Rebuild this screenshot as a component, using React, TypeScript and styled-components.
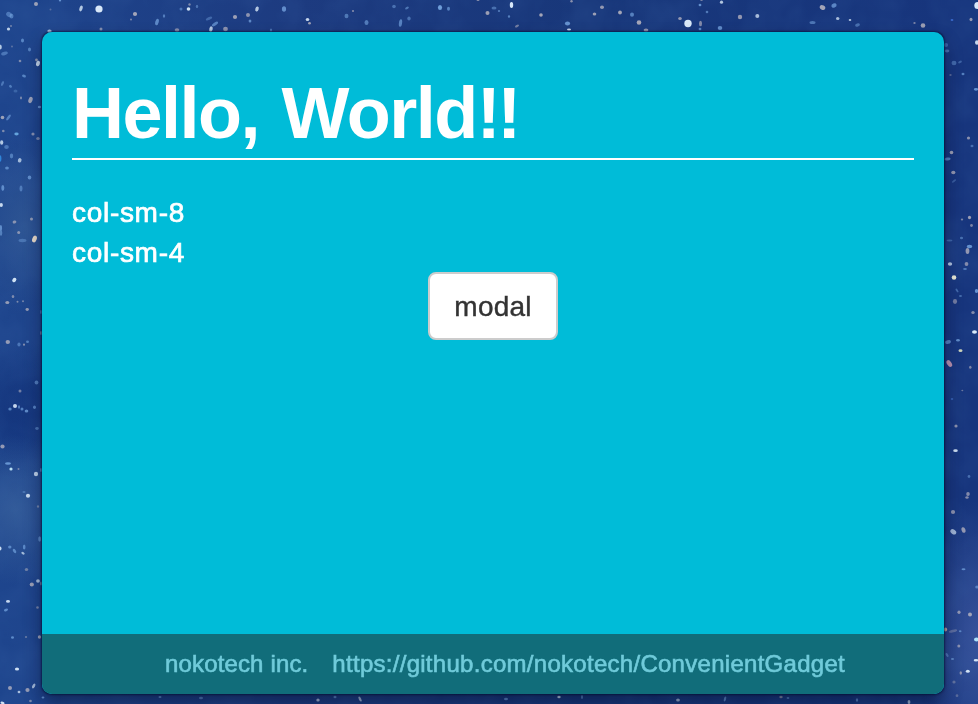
import React from "react";
import styled, { createGlobalStyle } from "styled-components";

const GlobalStyle = createGlobalStyle`
  * { box-sizing: border-box; }
  html, body { margin: 0; padding: 0; overflow: hidden; }
  body { font-family: "Liberation Sans", Arial, sans-serif; }
`;

const Desktop = styled.div`
  position: relative;
  width: 978px;
  height: 704px;
  padding: 32px 34px 10px 42px;
  overflow: hidden;
  background:
    radial-gradient(ellipse 60px 75px at 15px 510px, rgba(70, 112, 165, 0.5), transparent),
    radial-gradient(ellipse 55px 90px at 25px 225px, rgba(64, 104, 155, 0.45), transparent),
    radial-gradient(ellipse 60px 70px at 20px 410px, rgba(10, 38, 110, 0.6), transparent),
    radial-gradient(ellipse 60px 140px at 978px 640px, rgba(66, 92, 165, 0.75), transparent),
    linear-gradient(90deg, #1e458d 0%, #1d3b80 30%, #18377a 60%, #17357d 100%);
`;

const Sky = styled.svg`
  position: absolute;
  inset: 0;
`;

const Window = styled.main`
  position: relative;
  display: flex;
  flex-direction: column;
  height: 662px;
  overflow: hidden;
  border-radius: 10px;
  background: #00bcd8;
`;

const Frame = styled.div`
  position: relative;
  border-radius: 10px;
  box-shadow: 0 0 2px 0.5px rgba(0, 10, 40, 0.55), 0 10px 18px rgba(0, 8, 35, 0.45);
`;

const Content = styled.div`
  flex: 1;
  padding: 40px 30px 0;
  color: #fff;
`;

const Title = styled.h1`
  height: 88px;
  margin: 0 0 32px;
  border-bottom: 2px solid #fff;
  font-size: 72px;
  line-height: 83px;
  letter-spacing: -1.5px;
  word-spacing: 4px;
  white-space: nowrap;
`;

const Exclaim = styled.span`
  letter-spacing: -3.5px;
`;

const Column = styled.div`
  height: 40px;
  font-size: 28px;
  line-height: 42px;
  letter-spacing: 0.7px;
  -webkit-text-stroke: 0.7px currentColor;
`;

const Actions = styled.div`
  display: flex;
  justify-content: center;
`;

const Button = styled.button`
  width: 130px;
  height: 68px;
  padding: 2px 0 0;
  border: 2px solid #ccc;
  border-radius: 8px;
  background: #fff;
  color: #333;
  font: 28px/40px "Liberation Sans", Arial, sans-serif;
  letter-spacing: 0.2px;
  -webkit-text-stroke: 0.4px currentColor;
`;

const Footer = styled.footer`
  display: flex;
  justify-content: center;
  gap: 24px;
  height: 60px;
  padding-left: 24px;
  background: #116d7a;
  color: #70cbda;
  font-size: 24px;
  line-height: 60px;
  white-space: nowrap;
  -webkit-text-stroke: 0.6px currentColor;
`;

const FooterText = styled.span<{ $spacing: number }>`
  letter-spacing: ${(p) => p.$spacing}px;
`;

// Each star: x, y, horizontal radius, vertical radius, tint, opacity, tilt.
type Star = [number, number, number, number, string, number, number?];
const W = "#e3f2ff";
const B = "#7daee8";
const G = "#c6bfc6";

const stars: Star[] = [
  [36, 4, 2, 2, G, 0.8], [60, 0, 1.2, 1.5, B, 0.8], [81, 8.5, 1.6, 3, W, 0.8, 20], [99, 9, 3.6, 3.6, W, 1],
  [9, 14.5, 3, 2.4, B, 0.5, 35], [11.5, 16, 2, 2.5, B, 0.55], [8.5, 29, 1.6, 1.5, W, 0.85], [11, 26, 1, 1, G, 0.55],
  [49.5, 31, 2.2, 1.5, W, 0.75], [50.5, 9.5, 1, 1, G, 0.35], [101, 29, 1.5, 1.5, G, 0.65], [135, 14, 2.1, 2.1, G, 0.85],
  [131, 19.5, 1, 1, G, 0.6], [157, 22, 1.7, 3.4, B, 0.7, 15], [164, 16, 1.2, 1.7, B, 0.6], [177, 30, 2.3, 1.8, G, 0.65],
  [181, 9, 1.5, 1.5, B, 0.5], [188.5, 9, 1.8, 1.7, W, 0.95], [189.5, 4.5, 1.2, 1.2, G, 0.6], [197, 6.5, 1.2, 1.8, B, 0.5],
  [209, 18.5, 3.4, 1.5, B, 0.4, -25], [211, 29, 1.7, 2.7, W, 0.8, 15], [215, 24, 3.6, 1.4, B, 0.65, -35],
  [225.5, 29, 2.4, 2.2, G, 0.7], [235, 17, 2.1, 2, G, 0.8], [248, 15, 2, 1.9, G, 0.7], [250, 21, 1.4, 1.6, B, 0.7],
  [257, 9, 1.7, 2.5, W, 0.8, 18], [284, 9, 2.1, 2.8, B, 0.75], [307.5, 19.5, 1.8, 1.5, W, 0.9],
  [309.5, 23.3, 1.4, 1.2, G, 0.8], [271, 30, 1.2, 1.6, B, 0.5], [346.5, 16, 2, 2.3, B, 0.55],
  [353, 11, 1.1, 1, G, 0.65], [366.5, 22.5, 2, 2.5, B, 0.6], [394, 6.5, 1.8, 1.7, B, 0.5],
  [400.5, 23, 1.6, 3.8, B, 0.65, 8], [407, 8, 2, 1.2, B, 0.55, -30], [409, 18.5, 1.7, 1.9, B, 0.5],
  [440, 7.5, 2.1, 2.6, B, 0.9], [448.5, 8.7, 1.5, 2, B, 0.65], [478, 0, 1.5, 1, G, 0.7],
  [487.5, 13, 2, 2, G, 0.8], [494, 8, 2.5, 1.5, B, 0.5], [499, 11, 1.2, 1, B, 0.6],
  [509, 16.5, 1.2, 1.3, B, 0.65], [511.5, 5, 1.7, 3, W, 1], [517, 26, 2.2, 1.2, G, 0.55, -30],
  [541, 15, 1.8, 1.8, G, 0.85], [567.5, 23.5, 2.6, 2.1, B, 0.8], [569, 29.5, 2, 1.1, W, 0.9],
  [571.5, 1.2, 1.2, 1.2, G, 0.7], [594.5, 14, 1.8, 1.6, G, 0.8], [602, 7.2, 2, 1.8, G, 0.75],
  [620, 12.5, 1.9, 1.9, G, 0.85], [632, 14.7, 2, 2.1, B, 0.65], [639, 22.5, 2.3, 2.2, G, 0.85],
  [646, 30, 2.4, 1.6, G, 0.75], [688, 23.5, 3.7, 3.7, W, 1], [680, 18.5, 1.8, 1.6, G, 0.75],
  [700.5, 23.5, 1.5, 2.8, G, 0.65], [700, 29, 1.4, 1.2, B, 0.7], [700, 5, 1.4, 1.3, B, 0.8],
  [701.5, 0, 1.3, 1, G, 0.6], [721.5, 2.2, 1.6, 1.6, W, 0.8], [720, 28, 2.3, 1.9, B, 0.75],
  [740, 17, 2.2, 2.2, G, 0.75], [757.3, 16, 2, 1.9, W, 0.75], [707, 12, 1.3, 1.2, B, 0.6],
  [812.5, 22.5, 3, 1.5, B, 0.55], [822.5, 7.5, 2.9, 2.3, G, 0.85, 30], [834, 5.5, 2.7, 2, B, 0.7, -20],
  [837.7, 18.5, 1.7, 1.6, W, 0.75], [850, 20, 1.3, 1.1, W, 0.8], [857.5, 25, 2.5, 1.6, B, 0.5, -20],
  [923, 25.5, 2.3, 2.2, G, 0.8], [914.5, 23, 1.2, 1, G, 0.6], [952, 20, 1.4, 1.1, "#4a80ee", 0.7],
  [971, 19.5, 1.5, 1.8, G, 0.75], [977.5, 5.5, 3.2, 3.6, W, 1], [977, 42.5, 2, 2.2, W, 0.9],
  [946, 45, 2.1, 2, B, 0.4], [947, 51, 2.4, 1.4, B, 0.5], [22.5, 40.5, 1.5, 2, B, 0.65],
  [0, 47, 1.8, 2.5, W, 0.8], [12, 46.5, 1, 1, G, 0.4], [29.5, 49.5, 1.5, 2, B, 0.6],
  [4.5, 53.5, 3.4, 1.7, B, 0.5, -15], [20, 61, 1.3, 1.3, G, 0.6], [36.5, 60, 1.4, 1.4, G, 0.7],
  [38, 63.5, 1.9, 2.8, W, 0.9, 20], [24, 76, 2, 1.4, B, 0.65, 20], [2.5, 83.5, 1.2, 2.6, B, 0.5, 25],
  [10.5, 86.3, 1.6, 1.3, B, 0.55, 45], [15.5, 91, 2, 1.5, B, 0.3], [30.5, 100, 2, 3.2, G, 0.8, 20],
  [21, 98, 1, 1.4, G, 0.6], [39.5, 107, 1.7, 1.2, B, 0.75], [2.5, 117.5, 1.8, 1.8, G, 0.8],
  [8.5, 117.5, 1.2, 3.5, B, 0.6, 35], [3.3, 131, 1.3, 1.3, G, 0.6], [16.5, 134, 2.2, 1.4, "#76b9ee", 0.85],
  [33, 134, 1.6, 1.6, G, 0.65], [38, 138.5, 1.8, 1.5, G, 0.55], [1.7, 142.5, 1.6, 2.2, W, 0.8],
  [6.5, 147, 2.3, 2, B, 0.5], [0, 158.5, 1.4, 3.2, "#38a4ff", 0.7], [11.5, 156, 1.7, 2.4, B, 0.55],
  [19.7, 160.3, 1.8, 2.3, W, 0.7, 20], [7, 168, 1.9, 1.5, B, 0.65], [29.5, 177.5, 1.8, 2, B, 0.7],
  [2.8, 188, 1.5, 2.9, B, 0.7], [21, 188.5, 1.5, 3, B, 0.5], [1.2, 205, 1.7, 2, W, 0.9],
  [31.5, 219, 1.5, 1.6, G, 0.7], [14.5, 222, 1.9, 1.5, G, 0.65, -20], [18.7, 232.5, 1.5, 1.6, G, 0.65],
  [0.8, 228, 1.3, 3, B, 0.7], [34.5, 239, 2.2, 3.5, "#ffebd0", 0.95, 20], [22.5, 240.5, 4, 1.7, B, 0.4],
  [1, 233, 1.3, 3, B, 0.55], [14.3, 280, 1.9, 2.4, W, 0.95, 35], [13, 296.5, 1.3, 1.6, G, 0.6],
  [7.3, 302.5, 2, 1.6, G, 0.75], [17.5, 301.7, 1, 1, G, 0.6], [23, 301.3, 1, 1, G, 0.55],
  [27.2, 309.5, 1.7, 1.4, G, 0.75], [7.8, 342, 2.2, 2, G, 0.75], [19, 344.5, 1.6, 2, B, 0.5],
  [27.5, 341.8, 1.5, 1.3, B, 0.6], [24, 344.7, 1.1, 1.1, G, 0.65], [41, 312, 1, 2, B, 0.5],
  [41, 333, 1, 2, G, 0.5], [36.5, 382.5, 1.9, 2, B, 0.6], [20, 391, 1.5, 1.6, G, 0.55],
  [15, 406, 2, 1.9, W, 0.9], [10, 409, 1.7, 1.5, B, 0.65], [19, 407, 1.1, 1.7, B, 0.6],
  [22, 409, 1.5, 1.6, B, 0.65], [26.5, 411, 1.8, 1.5, B, 0.75], [34.5, 407.3, 1.5, 1.8, B, 0.65],
  [37, 428.5, 1.8, 1.4, B, 0.5], [2.5, 446.5, 2.1, 2.1, G, 0.75], [8, 463.5, 3, 1.3, B, 0.8],
  [11, 469, 1.6, 1.6, "#c9f0ff", 0.95], [18.5, 469, 1, 1, G, 0.55], [36, 474, 2.1, 2.2, W, 0.85],
  [41, 470, 1, 2, B, 0.65], [28, 495.7, 2.1, 2, W, 0.9], [24, 492, 1.6, 1, B, 0.4],
  [38, 506.5, 1.1, 1.2, G, 0.5], [0, 548.5, 1.5, 2, W, 0.9], [9.8, 547, 1.7, 1.5, B, 0.65],
  [24.2, 547, 1.3, 2.5, B, 0.65], [14.5, 551, 1.4, 2.4, B, 0.65, -35], [23, 553.2, 1.8, 1.2, W, 0.7, 30],
  [39.7, 539, 1.4, 2.7, B, 0.65], [26.5, 569.5, 1.7, 1.6, G, 0.5], [31.8, 584.5, 2.1, 1.9, G, 0.8],
  [38, 581, 1.9, 1.7, W, 0.75], [41, 583.5, 1, 2, G, 0.5], [8, 601.4, 2, 1.4, W, 0.9],
  [6, 610, 2.1, 1.2, B, 0.7, -20], [37.5, 607.5, 1.3, 1.2, G, 0.55], [12.5, 637.5, 1.5, 1.2, B, 0.7],
  [26, 637, 1.2, 1.1, G, 0.45], [39.5, 637, 1.7, 1.8, G, 0.8], [17, 669, 2.1, 1.5, W, 0.95],
  [10, 688, 2, 1.9, G, 0.75], [19, 692, 1.4, 1.3, W, 0.75], [27.5, 690, 2.1, 1.9, G, 0.75],
  [33.7, 686, 1.3, 2.6, W, 0.7, 30], [2.5, 703, 2.1, 1.3, W, 0.95, 20], [30.5, 701, 1.3, 1.2, G, 0.6],
  [43, 697.5, 1.4, 1.1, B, 0.8], [954, 63, 2.5, 2.2, B, 0.45], [960, 62, 2, 1.1, B, 0.4, -25],
  [963, 74, 1.5, 1.3, B, 0.65], [950.5, 75, 1.2, 1, G, 0.4], [976, 89.3, 2.2, 1.4, B, 0.8],
  [968.5, 138, 1.6, 1.6, G, 0.7], [972, 146, 1.5, 1.2, B, 0.5], [951.5, 152.5, 1.8, 1.7, G, 0.8],
  [947.5, 159, 3.1, 1.5, B, 0.65, -10], [953.3, 172.5, 2.1, 1.8, G, 0.75],
  [954, 181, 2.4, 1, B, 0.35, -35], [969.5, 217.5, 1.6, 1.8, G, 0.8], [962, 219.5, 1.2, 1.1, G, 0.6],
  [971.5, 225.5, 1.4, 1.4, G, 0.6], [961.5, 238, 1.6, 1.3, B, 0.5], [949.5, 240.5, 3, 1, B, 0.4],
  [969.5, 246.5, 2.8, 1.7, B, 0.8], [967.5, 251, 1.9, 3, G, 0.75], [950, 264, 2.2, 1.8, W, 0.8],
  [966.5, 264, 1.9, 2, G, 0.65], [965, 269, 1.9, 1, B, 0.6], [954, 277.5, 2.3, 2.2, "#f5f4dc", 1],
  [976.5, 291, 1.7, 2, B, 0.8], [957, 290.5, 1, 2.2, B, 0.45, -35], [960.5, 296, 1.5, 1.1, B, 0.5],
  [955, 301.5, 2.1, 2.4, G, 0.55], [973, 312.5, 1.7, 1.6, G, 0.65], [974.5, 332, 2.5, 1.8, W, 1],
  [948, 342, 3, 1.9, B, 0.65, -15], [958, 340.2, 1.9, 1.2, B, 0.75], [960.5, 350.7, 2, 1.4, "#eceec8", 0.9],
  [949.3, 363.5, 2.2, 3.8, "#e2a9bb", 0.85, -35], [970.3, 367.3, 1.2, 1.5, G, 0.6],
  [962.3, 390.5, 1, 0.8, G, 0.5], [952, 399, 1.3, 0.8, "#568ae8", 0.7], [956, 426, 1.6, 1.5, G, 0.7],
  [955.5, 450.7, 2.3, 1.4, W, 0.95], [969, 476.5, 1.4, 1.4, B, 0.5], [968, 494, 1.8, 1.9, G, 0.65],
  [967, 497.5, 1.7, 1.3, G, 0.65], [953, 512, 2.1, 1.9, G, 0.7], [953.3, 531.8, 3.2, 2.3, W, 0.7, 35],
  [963.5, 530, 1.9, 2.9, G, 0.75, -20], [963.5, 569.3, 2, 1, B, 0.7], [977, 587, 1.8, 1.5, B, 0.6],
  [959, 612.3, 1.6, 1.7, G, 0.7], [970, 614.5, 2, 2.1, G, 0.8], [945.5, 629.5, 1.6, 2, "#efc4a8", 0.85],
  [953, 631, 4.3, 1.4, G, 0.35, -15], [960.2, 631.2, 1.3, 1, B, 0.65], [976.5, 639.5, 2.5, 1.9, "#b4e9ff", 1],
  [958.8, 646, 1.5, 1.6, G, 0.65], [947, 655, 1.2, 2.2, B, 0.5, -30], [952.5, 659, 1.6, 1.1, B, 0.65],
  [976, 660.3, 2.3, 1.3, W, 0.95], [967.8, 671.3, 2, 1.5, W, 0.95], [960.8, 673, 1.2, 1.7, G, 0.7],
  [954, 682, 1.6, 1.5, G, 0.4], [957, 695.7, 1.4, 1.4, G, 0.35],
  [160, 697, 1.5, 1, B, 0.75], [201, 698, 2, 1.3, B, 0.6], [318, 700, 1.7, 1.5, W, 0.75],
  [335, 697, 1.5, 1.2, B, 0.7], [360, 699, 1.2, 2.8, W, 0.7, -25], [506, 699, 2, 1.2, B, 0.7],
  [559, 697, 1.7, 1.3, W, 0.85], [582, 697, 1, 2, B, 0.65], [678, 700, 1.9, 1.5, W, 0.7],
  [725, 699, 1.1, 2.5, B, 0.7, 15], [781, 697, 1.7, 1.3, G, 0.65], [788, 698, 1.4, 1.1, B, 0.6],
  [857, 700, 1.2, 1.8, B, 0.65], [909, 702, 1.4, 2, W, 0.7],
];

const NightSky = () => (
  <Sky width="978" height="704" viewBox="0 0 978 704" aria-hidden="true">
    <defs>
      <filter id="haze" x="0" y="0" width="100%" height="100%" colorInterpolationFilters="sRGB">
        <feTurbulence type="fractalNoise" baseFrequency="0.03 0.025" numOctaves="3" seed="8" />
        <feColorMatrix values="0 0 0 0 0.25  0 0 0 0 0.42  0 0 0 0 0.68  0.9 0 0 0 -0.3" />
      </filter>
      <filter
        id="glow"
        filterUnits="userSpaceOnUse"
        x="-10"
        y="-10"
        width="998"
        height="724"
        colorInterpolationFilters="sRGB"
      >
        <feGaussianBlur stdDeviation="0.75" />
      </filter>
    </defs>
    <rect width="978" height="704" filter="url(#haze)" opacity="0.35" />
    <g filter="url(#glow)" opacity="0.95">
      {stars.map(([x, y, rx, ry, fill, opacity, tilt = 0], i) => (
        <ellipse
          key={i}
          cx={x}
          cy={y}
          rx={rx}
          ry={ry}
          fill={fill}
          opacity={opacity}
          transform={`rotate(${tilt} ${x} ${y})`}
        />
      ))}
    </g>
  </Sky>
);

export default function App() {
  return (
    <>
      <GlobalStyle />
      <Desktop>
        <NightSky />
        <Frame>
          <Window>
            <Content>
              <Title>
                Hello, World<Exclaim>!!</Exclaim>
              </Title>
              <Column>col-sm-8</Column>
              <Column>col-sm-4</Column>
              <Actions>
                <Button type="button">modal</Button>
              </Actions>
            </Content>
            <Footer>
              <FooterText $spacing={0.15}>nokotech inc.</FooterText>
              <FooterText $spacing={0.28}>https://github.com/nokotech/ConvenientGadget</FooterText>
            </Footer>
          </Window>
        </Frame>
      </Desktop>
    </>
  );
}
